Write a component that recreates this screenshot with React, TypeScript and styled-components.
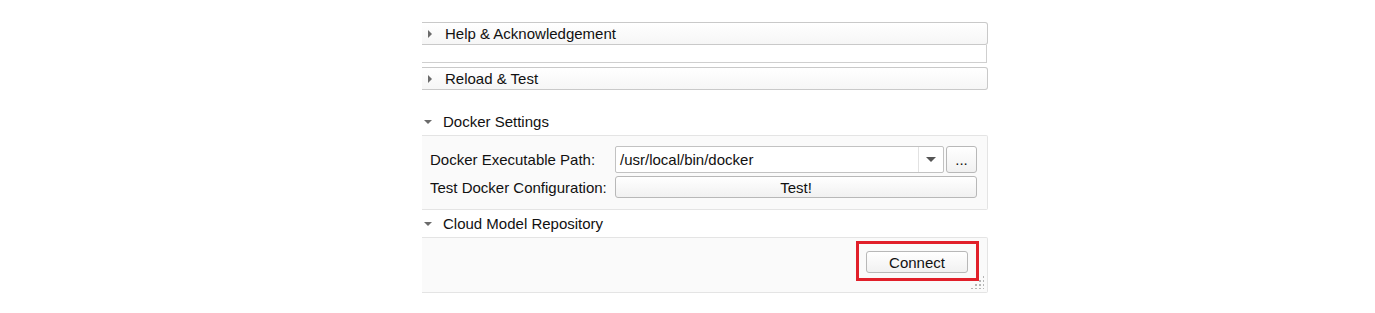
import React from "react";
import styled, { createGlobalStyle } from "styled-components";

const GlobalStyle = createGlobalStyle`
  html, body {
    margin: 0;
    padding: 0;
    background: #ffffff;
  }
  body {
    font-family: "Liberation Sans", Arial, sans-serif;
    color: #111;
  }
`;

const Page = styled.div`
  width: 1375px;
  height: 313px;
  padding-top: 22px;
  box-sizing: border-box;
  overflow: hidden;
`;

const Column = styled.div`
  margin-left: 422px;
  width: 566px;
  display: flex;
  flex-direction: column;
`;

const BarHeader = styled.div<{ $gap?: number }>`
  height: 23px;
  display: flex;
  align-items: center;
  box-sizing: border-box;
  border: 1px solid #c9c9c9;
  border-left: none;
  border-radius: 0 3px 3px 0;
  background: linear-gradient(#ffffff, #f6f6f6);
  font-size: 15px;
  margin-top: ${(p) => p.$gap ?? 0}px;
`;

const EmptyPanel = styled.div`
  height: 17px;
  border: 1px solid #cfcfcf;
  border-top: none;
  border-left: none;
  margin-right: 1px;
  background: #fff;
`;

const PlainHeader = styled.div<{ $gap?: number }>`
  height: 27px;
  margin-top: ${(p) => p.$gap ?? 0}px;
  display: flex;
  align-items: center;
  font-size: 15px;
`;

const Arrow = styled.span<{ $open?: boolean }>`
  width: 0;
  height: 0;
  margin-right: ${(p) => (p.$open ? 11 : 13)}px;
  margin-left: ${(p) => (p.$open ? 2 : 6)}px;
  ${(p) =>
    p.$open
      ? `border-left: 4px solid transparent;
         border-right: 4px solid transparent;
         border-top: 4px solid #6b6b6b;
         margin-top: 1px;`
      : `border-top: 4px solid transparent;
         border-bottom: 4px solid transparent;
         border-left: 4px solid #6b6b6b;`}
`;

const Panel = styled.div<{ $height: number }>`
  height: ${(p) => p.$height}px;
  box-sizing: border-box;
  background: #fafafa;
  border: 1px solid #e4e4e4;
  border-left: none;
  border-radius: 0 2px 2px 0;
  position: relative;
`;

const FormGrid = styled.div`
  display: grid;
  grid-template-columns: 185px 1fr;
  row-gap: 3px;
  padding: 10px 10px 0 8px;
  align-items: center;
  font-size: 15px;
`;

const Label = styled.span`
  white-space: nowrap;
`;

const PathRow = styled.div`
  display: flex;
  gap: 2px;
`;

const Combo = styled.div`
  flex: 1;
  height: 27px;
  box-sizing: border-box;
  display: flex;
  border: 1px solid #c2c2c2;
  border-radius: 2px;
  background: #fff;
`;

const ComboText = styled.div`
  flex: 1;
  display: flex;
  align-items: center;
  padding-left: 4px;
  font-size: 15px;
`;

const ComboDrop = styled.div`
  width: 24px;
  border-left: 1px solid #e2e2e2;
  display: flex;
  align-items: center;
  justify-content: center;
  &::after {
    content: "";
    border-left: 5px solid transparent;
    border-right: 5px solid transparent;
    border-top: 5px solid #555;
  }
`;

const Button = styled.button<{ $w?: string; $h: number }>`
  width: ${(p) => p.$w ?? "auto"};
  height: ${(p) => p.$h}px;
  box-sizing: border-box;
  border: 1px solid #b8b8b8;
  border-radius: 3px;
  background: linear-gradient(#ffffff, #f1f1f1);
  font-family: "Liberation Sans", Arial, sans-serif;
  font-size: 15px;
  color: #111;
  padding: 0;
  display: flex;
  align-items: center;
  justify-content: center;
`;

const ConnectArea = styled.div`
  display: flex;
  justify-content: flex-end;
  padding: 3px 8px 0 0;
`;

const Highlight = styled.div`
  border: 3px solid #e1202a;
  padding: 7px 8px 5px 7px;
`;

const Grip = styled.div`
  position: absolute;
  right: 3px;
  bottom: 3px;
  width: 14px;
  height: 14px;
  background-image: radial-gradient(circle, #b5b5b5 0.8px, transparent 1px);
  background-size: 4px 4px;
  clip-path: polygon(100% 0, 100% 100%, 0 100%);
`;

export default function App() {
  return (
    <Page>
      <GlobalStyle />
      <Column>
        <BarHeader>
          <Arrow />
          Help &amp; Acknowledgement
        </BarHeader>
        <EmptyPanel />
        <BarHeader $gap={4}>
          <Arrow />
          Reload &amp; Test
        </BarHeader>
        <PlainHeader $gap={18}>
          <Arrow $open />
          Docker Settings
        </PlainHeader>
        <Panel $height={75}>
          <FormGrid>
            <Label>Docker Executable Path:</Label>
            <PathRow>
              <Combo>
                <ComboText>/usr/local/bin/docker</ComboText>
                <ComboDrop />
              </Combo>
              <Button $w="31px" $h={27}>
                ...
              </Button>
            </PathRow>
            <Label>Test Docker Configuration:</Label>
            <Button $w="100%" $h={22}>
              Test!
            </Button>
          </FormGrid>
        </Panel>
        <PlainHeader>
          <Arrow $open />
          Cloud Model Repository
        </PlainHeader>
        <Panel $height={56}>
          <ConnectArea>
            <Highlight>
              <Button $w="102px" $h={22}>
                Connect
              </Button>
            </Highlight>
          </ConnectArea>
          <Grip />
        </Panel>
      </Column>
    </Page>
  );
}
